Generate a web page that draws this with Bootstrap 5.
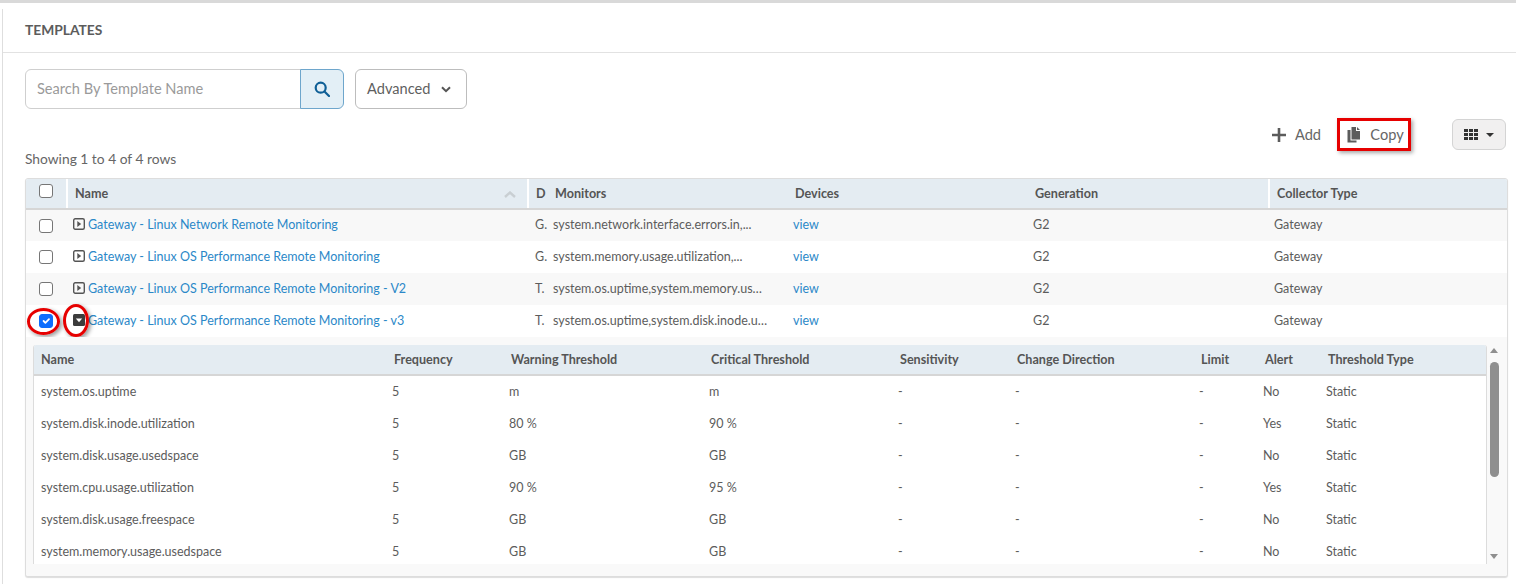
<!DOCTYPE html>
<html lang="en">
<head>
    <meta charset="UTF-8">
    <meta name="viewport" content="width=device-width, initial-scale=1">
    <title>Templates</title>
    <link href="https://cdn.jsdelivr.net/npm/bootstrap@5.3.0/dist/css/bootstrap.min.css" rel="stylesheet">
    <style>
        html, body { height: 584px; overflow: hidden; }
        body { background: #fff; color: #5a5a5a; font-family: "Lato", "Liberation Sans", sans-serif; font-size: 12.5px; border-top: 3px solid #d9d9d9; }
        .tpl-panel { border-left: 1px solid #dedede; margin-left: 2px; margin-top: 6px; height: 100%; }
        .tpl-head { height: 44px; padding: 0 22px; border-bottom: 1px solid #e2e2e2; font-size: 13.8px; font-weight: 700; color: #5c5c5c; }
        .tpl-body { padding: 16px 8px 0 22px; }
        .tpl-search { width: 319px; height: 40px; }
        .tpl-search .form-control { font-size: 14.6px; color: #666; border-color: #cfcfcf; padding-left: 11px; font-family: inherit; }
        .tpl-search .form-control::placeholder { color: #9a9a9a; }
        .btn-find { width: 44px; padding: 0; background: #e3eff6; border: 1px solid #6ea6cc; }
        .btn-adv { height: 40px; width: 112px; margin-left: 11px; padding: 0 11px; font-size: 14.6px; color: #5f5f5f; border: 1px solid #bdbdbd; background: #fff; }
        .tool-row { height: 33px; margin-top: 9px; padding-right: 2px; }
        .tool-link { font-size: 14.6px; color: #666; padding-top: 1px; }
        .tool-add { gap: 9px; margin-right: 0; }
        .tool-copy { width: 74px; height: 33px; margin-left: 16px; gap: 9px; padding-left: 2px; border: 3px solid #e60000; box-shadow: 2px 2px 4px rgba(0,0,0,.35); }
        .btn-cols { width: 54px; height: 31px; margin-left: 41px; margin-top: 1px; align-self: flex-start; padding: 0; background: #f1f0f0; border: 1px solid #d4d4d4; }
        .rows-info { font-size: 13.8px; color: #666; margin: -1px 0 10px; line-height: 18px; height: 18px; }
        .grid-box { width: 1483px; height: 399px; border: 1px solid #dddddd; border-radius: 3px; box-shadow: 0 1px 1px #ddd; overflow: hidden; background: #f9f9f9; }
        .main-grid, .sub-grid { table-layout: fixed; border-collapse: collapse; margin: 0; width: 100%; --bs-table-bg: transparent; --bs-table-color: #5a5a5a; }
        .main-grid th, .sub-grid th { background: #e4ecf2; color: #555; font-weight: 700; font-size: 12.6px; padding: 2px 7px 0; border: 0; vertical-align: middle; }
        .main-grid th { height: 30px; border-bottom: 2px solid #d6d6d6; }
        .main-grid th.cell-plain { border-left: 2px solid #fff; }
        .main-grid th.cell-tight { padding-left: 6px; }
        .main-grid td, .sub-grid td { height: 32px; padding: 0 8px; border: 0; vertical-align: middle; color: #5c5c5c; white-space: nowrap; overflow: hidden; text-overflow: ellipsis; }
        .main-grid tbody tr.row-alt td { background: #f8f8f8; }
        .main-grid tbody tr.row-pl td { background: #fff; }
        .main-grid td.cell-nopad { padding-left: 7px; padding-right: 0; overflow: visible; }
        .main-grid td.cell-last { padding-left: 5px; }
        .main-grid a { color: #2b88c8; text-decoration: none; }
        .main-grid .form-check-input { width: 14px; height: 14px; margin: 0; border: 1px solid #767676; border-radius: 3px; display: block; }
        .main-grid .form-check-input:checked { background-color: #0d6efd; border-color: #0d6efd; }
        .main-grid th .form-check-input { position: relative; top: -4px; }
        .tree-icon { display: inline-block; vertical-align: -1px; margin-right: 3px; }
        .cell-check { position: relative; overflow: visible !important; padding-left: 13px !important; }
        .cell-name { position: relative; overflow: visible !important; padding-left: 6px !important; }
        .ring { position: absolute; border: 3px solid #e60000; border-radius: 50%; box-shadow: 2px 2px 4px rgba(0,0,0,.4); pointer-events: none; }
        .ring-check { left: 1px; top: 3px; width: 33px; height: 27px; }
        .ring-tree { left: -4px; top: -1px; width: 26px; height: 33px; }
        .sub-wrap { padding: 8px 22px 0 7px; position: relative; height: 239px; background: #f9f9f9; }
        .sub-box { height: 219px; overflow: hidden; background: #fff; border-left: 1px solid #dcdcdc; border-right: 1px solid #dcdcdc; border-top-left-radius: 3px; border-top-right-radius: 3px; }
        .sub-grid th { height: 30px; border-bottom: 2px solid #d6d6d6; }
        .sub-grid td { padding-left: 7px; }
        .sub-grid td.cell-sub { padding-left: 5px; }
        .sub-grid tbody tr:first-child td { height: 33px; }
        .sub-scroll { position: absolute; right: 7px; top: 8px; width: 14px; height: 219px; }
        .sub-thumb { position: absolute; left: 2px; top: 17px; width: 9px; height: 115px; border-radius: 5px; background: #8f8f8f; }
        .sub-up { position: absolute; left: 2px; top: 0; border: 4.5px solid transparent; border-top: 0; border-bottom: 5px solid #8f8f8f; margin-top: 3px; }
        .sub-down { position: absolute; left: 2px; bottom: 5px; border: 4.5px solid transparent; border-bottom: 0; border-top: 5px solid #8f8f8f; }
        .sort-up { display: block; }
    </style>
</head>
<body>
    <div class="tpl-panel">
        <div class="tpl-head d-flex align-items-center">TEMPLATES</div>
        <div class="tpl-body">
            <div class="d-flex">
                <div class="input-group tpl-search">
                    <input type="text" class="form-control" placeholder="Search By Template Name">
                    <button class="btn btn-find d-flex align-items-center justify-content-center" type="button">
                        <svg width="16" height="16" viewBox="0 0 16 16" fill="none" stroke="#0f5f96" stroke-width="2.2"><circle cx="6.7" cy="6.7" r="5"/><path d="M10.5 10.5 15 15" stroke-linecap="round"/></svg>
                    </button>
                </div>
                <button class="btn btn-adv d-flex align-items-center justify-content-between" type="button">Advanced
                    <svg class="me-1" width="10" height="7" viewBox="0 0 10 7" fill="none" stroke="#555" stroke-width="2"><path d="M1 1.2 5 5.2 9 1.2"/></svg>
                </button>
            </div>
            <div class="tool-row d-flex justify-content-end align-items-center">
                <span class="tool-link tool-add d-flex align-items-center">
                    <svg width="14" height="14" viewBox="0 0 14 14" fill="#5c5c5c"><path d="M5.7 0h2.6v5.7H14v2.6H8.3V14H5.7V8.3H0V5.7h5.7z"/></svg>Add
                </span>
                <span class="tool-link tool-copy d-flex align-items-center justify-content-center">
                    <svg width="15" height="16" viewBox="0 0 14 16" fill="#5c5c5c"><path d="M5 0h4.5v4H13.5V12.5H5z"/><path d="M10.5 0 13.5 3H10.5z"/><path d="M1 3h3V13.5H10V15.5H1z"/></svg>Copy
                </span>
                <button class="btn btn-cols d-flex align-items-center justify-content-center gap-2" type="button">
                    <svg width="14" height="11" viewBox="0 0 14 11" fill="#333"><path d="M0 0h4v3H0zM5 0h4v3H5zM10 0h4v3h-4zM0 4h4v3H0zM5 4h4v3H5zM10 4h4v3h-4zM0 8h4v3H0zM5 8h4v3H5zM10 8h4v3h-4z"/></svg>
                    <svg width="8" height="4" viewBox="0 0 8 4" fill="#333"><path d="M0 0h8L4 4z"/></svg>
                </button>
            </div>
            <p class="rows-info">Showing 1 to 4 of 4 rows</p>
            <div class="grid-box">
                <table class="table main-grid">
                    <colgroup id="mainCols"></colgroup>
                    <thead>
                        <tr>
                            <th class="cell-check"><input class="form-check-input" type="checkbox"></th>
                            <th class="cell-plain"><div class="d-flex justify-content-between align-items-center pe-1">Name
                                <svg class="sort-up" width="12" height="7" viewBox="0 0 12 7" fill="none" stroke="#c9cfd3" stroke-width="2.4"><path d="M1 6 6 1.5 11 6"/></svg></div></th>
                            <th class="cell-plain">D</th>
                            <th class="cell-tight">Monitors</th>
                            <th class="cell-tight">Devices</th>
                            <th class="cell-tight">Generation</th>
                            <th class="cell-plain">Collector Type</th>
                        </tr>
                    </thead>
                    <tbody id="mainBody"></tbody>
                </table>
            </div>
        </div>
    </div>
    <script>
        const widths = [41, 461, 21, 240, 240, 240, 240];
        document.getElementById("mainCols").innerHTML = widths.map(w => `<col style="width:${w}px">`).join('');

        const templates = [
            ["Gateway - Linux Network Remote Monitoring", "G.", "system.network.interface.errors.in,..."],
            ["Gateway - Linux OS Performance Remote Monitoring", "G.", "system.memory.usage.utilization,..."],
            ["Gateway - Linux OS Performance Remote Monitoring - V2", "T.", "system.os.uptime,system.memory.us…"],
            ["Gateway - Linux OS Performance Remote Monitoring - v3", "T.", "system.os.uptime,system.disk.inode.u…"]
        ];
        const monitors = [
            ["system.os.uptime", "5", "m", "m", "No"],
            ["system.disk.inode.utilization", "5", "80 %", "90 %", "Yes"],
            ["system.disk.usage.usedspace", "5", "GB", "GB", "No"],
            ["system.cpu.usage.utilization", "5", "90 %", "95 %", "Yes"],
            ["system.disk.usage.freespace", "5", "GB", "GB", "No"],
            ["system.memory.usage.usedspace", "5", "GB", "GB", "No"]
        ];
        const closedIcon = `<svg class="tree-icon" width="12" height="12" viewBox="0 0 12 12"><rect x=".7" y=".7" width="10.6" height="10.6" rx="1.5" fill="none" stroke="#555" stroke-width="1.4"/><path d="M4.3 3 8.2 6 4.3 9z" fill="#555"/></svg>`;
        const openIcon = `<svg class="tree-icon" width="12" height="12" viewBox="0 0 12 12"><rect width="12" height="12" rx="1.5" fill="#3c3c3c"/><path d="M2.8 4.5h6.4L6 8.2z" fill="#fff"/></svg>`;

        let rows = templates.map((t, i) => {
            const open = i === 3;
            return `<tr class="${i % 2 ? 'row-pl' : 'row-alt'}">
                <td class="cell-check"><input class="form-check-input" type="checkbox" ${open ? 'checked' : ''}>${open ? '<span class="ring ring-check"></span>' : ''}</td>
                <td class="cell-name">${open ? openIcon + '<span class="ring ring-tree"></span>' : closedIcon}<a href="#">${t[0]}</a></td>
                <td class="cell-nopad">${t[1]}</td>
                <td class="px-1">${t[2]}</td>
                <td class="ps-1"><a href="#">view</a></td>
                <td class="ps-1">G2</td>
                <td class="cell-last">Gateway</td>
            </tr>`;
        }).join('');

        const subWidths = [353, 117, 200, 189, 117, 184, 64, 63, 166];
        const subRows = monitors.map(m => `<tr>
            <td>${m[0]}</td><td class="cell-sub">${m[1]}</td><td class="cell-sub">${m[2]}</td><td class="cell-sub">${m[3]}</td>
            <td class="cell-sub">-</td><td class="cell-sub">-</td><td class="cell-sub">-</td><td class="cell-sub">${m[4]}</td><td class="cell-sub">Static</td>
        </tr>`).join('');
        const heads = ["Name", "Frequency", "Warning Threshold", "Critical Threshold", "Sensitivity", "Change Direction", "Limit", "Alert", "Threshold Type"];
        rows += `<tr><td colspan="7" class="p-0 border-0"><div class="sub-wrap"><div class="sub-box">
            <table class="table sub-grid"><colgroup>${subWidths.map(w => `<col style="width:${w}px">`).join('')}</colgroup>
            <thead><tr>${heads.map(h => `<th>${h}</th>`).join('')}</tr></thead><tbody>${subRows}</tbody></table>
            </div><div class="sub-scroll"><span class="sub-up"></span><span class="sub-thumb"></span><span class="sub-down"></span></div></div></td></tr>`;
        document.getElementById("mainBody").innerHTML = rows;
    </script>
    <script src="https://cdn.jsdelivr.net/npm/bootstrap@5.3.0/dist/js/bootstrap.bundle.min.js"></script>
</body>
</html>
